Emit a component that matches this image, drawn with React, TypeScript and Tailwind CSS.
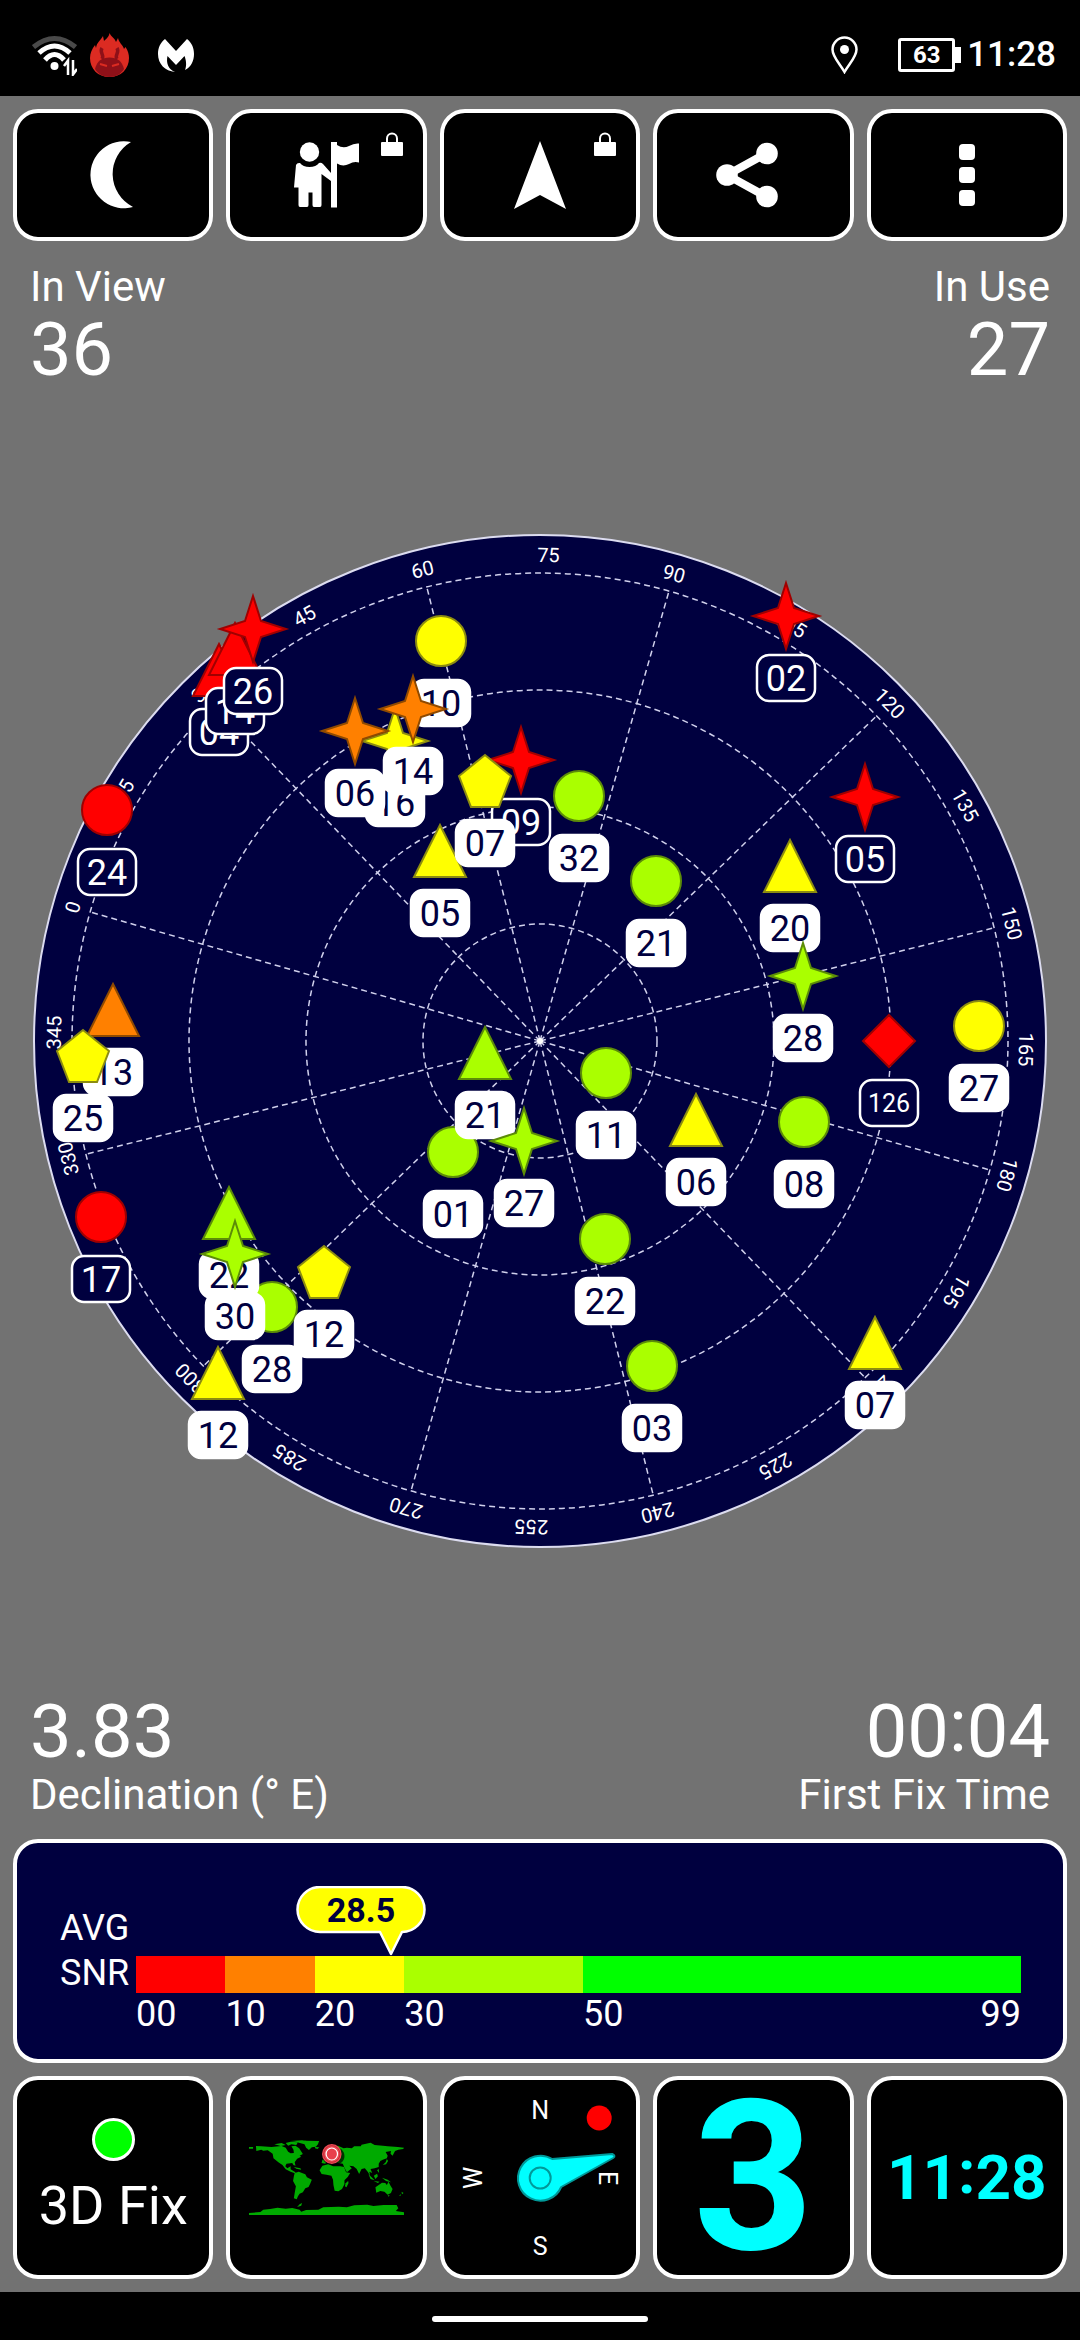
import type { ReactNode } from "react";

type Shape = "circle" | "triangle" | "star" | "pentagon" | "diamond";
type Tone = "red" | "orange" | "yellow" | "lime";
type Satellite = {
  id: string;
  shape: Shape;
  tone: Tone;
  x: number;
  y: number;
  unused?: boolean;
};

const TONES: Record<Tone, { fill: string; edge: string }> = {
  red: { fill: "#ff0000", edge: "#a00000" },
  orange: { fill: "#ff8000", edge: "#8f4a00" },
  yellow: { fill: "#ffff00", edge: "#8c8c10" },
  lime: { fill: "#aaff00", edge: "#5c8c08" },
};

// Positions are relative to the zenith, in chart units.
const SATELLITES: Satellite[] = [
  { id: "10", shape: "circle", tone: "yellow", x: -99, y: -400 },
  { id: "24", shape: "circle", tone: "red", x: -433, y: -231, unused: true },
  { id: "32", shape: "circle", tone: "lime", x: 39, y: -245 },
  { id: "21", shape: "circle", tone: "lime", x: 116, y: -160 },
  { id: "27", shape: "circle", tone: "yellow", x: 439, y: -15 },
  { id: "11", shape: "circle", tone: "lime", x: 66, y: 32 },
  { id: "08", shape: "circle", tone: "lime", x: 264, y: 81 },
  { id: "01", shape: "circle", tone: "lime", x: -87, y: 111 },
  { id: "17", shape: "circle", tone: "red", x: -439, y: 176, unused: true },
  { id: "22", shape: "circle", tone: "lime", x: 65, y: 198 },
  { id: "28", shape: "circle", tone: "lime", x: -268, y: 266 },
  { id: "03", shape: "circle", tone: "lime", x: 112, y: 325 },
  { id: "126", shape: "diamond", tone: "red", x: 349, y: 0, unused: true },
  { id: "04", shape: "triangle", tone: "red", x: -321, y: -371, unused: true },
  { id: "14", shape: "triangle", tone: "red", x: -305, y: -392, unused: true },
  { id: "05", shape: "triangle", tone: "yellow", x: -100, y: -190 },
  { id: "20", shape: "triangle", tone: "yellow", x: 250, y: -175 },
  { id: "13", shape: "triangle", tone: "orange", x: -427, y: -31 },
  { id: "21", shape: "triangle", tone: "lime", x: -55, y: 12 },
  { id: "06", shape: "triangle", tone: "yellow", x: 156, y: 79 },
  { id: "22", shape: "triangle", tone: "lime", x: -311, y: 172 },
  { id: "12", shape: "triangle", tone: "yellow", x: -322, y: 332 },
  { id: "07", shape: "triangle", tone: "yellow", x: 335, y: 302 },
  { id: "26", shape: "star", tone: "red", x: -287, y: -412, unused: true },
  { id: "02", shape: "star", tone: "red", x: 246, y: -425, unused: true },
  { id: "05", shape: "star", tone: "red", x: 325, y: -244, unused: true },
  { id: "09", shape: "star", tone: "red", x: -19, y: -281, unused: true },
  { id: "28", shape: "star", tone: "lime", x: 263, y: -65 },
  { id: "27", shape: "star", tone: "lime", x: -16, y: 100 },
  { id: "30", shape: "star", tone: "lime", x: -305, y: 213 },
  { id: "16", shape: "star", tone: "yellow", x: -145, y: -300 },
  { id: "06", shape: "star", tone: "orange", x: -185, y: -310 },
  { id: "14", shape: "star", tone: "orange", x: -127, y: -332 },
  { id: "07", shape: "pentagon", tone: "yellow", x: -55, y: -260 },
  { id: "25", shape: "pentagon", tone: "yellow", x: -457, y: 15 },
  { id: "12", shape: "pentagon", tone: "yellow", x: -216, y: 231 },
];

const OUTLINES: Record<Exclude<Shape, "circle">, string> = {
  triangle: "0,-26 26,26 -26,26",
  star: "0,-33 8,-8 33,0 8,8 0,33 -8,8 -33,0 -8,-8",
  pentagon: "0,-26 26,-5 14,26 -14,26 -26,-5",
  diamond: "0,-26 26,0 0,26 -26,0",
};

const NAVY = "#00003f";
const HEADING = 74;
const RINGS = [117, 234, 351, 468];
const SPOKES = Array.from({ length: 12 }, (_, i) => i * 30);
const DEGREES = Array.from({ length: 24 }, (_, i) => i * 15);

function Marker({ sat }: { sat: Satellite }) {
  const { fill, edge } = TONES[sat.tone];
  return (
    <g transform={`translate(${sat.x} ${sat.y})`}>
      {sat.shape === "circle" ? (
        <circle r="25" fill={fill} stroke={edge} strokeWidth="2" />
      ) : (
        <polygon points={OUTLINES[sat.shape]} fill={fill} stroke={edge} strokeWidth="2" />
      )}
      <rect
        x="-29"
        y="39"
        width="58"
        height="46"
        rx="12"
        fill={sat.unused ? NAVY : "#ffffff"}
        stroke="#ffffff"
        strokeWidth="2.5"
      />
      <text
        y={sat.id.length > 2 ? 71 : 75}
        textAnchor="middle"
        fontSize={sat.id.length > 2 ? 25 : 36}
        fill={sat.unused ? "#ffffff" : NAVY}
      >
        {sat.id}
      </text>
    </g>
  );
}

function SkyPlot() {
  return (
    <svg viewBox="-540 -520 1080 1040" className="block w-full" role="img" aria-label="Satellite sky plot">
      <circle r="506" fill={NAVY} stroke="#dcdcf0" strokeWidth="2" />
      <g fill="none" stroke="#d0d0ec" strokeWidth="1.5" strokeDasharray="6 4">
        {RINGS.map((r) => (
          <circle key={r} r={r} />
        ))}
        {SPOKES.map((a) => (
          <line key={a} y2="-468" transform={`rotate(${a - HEADING})`} />
        ))}
      </g>
      <circle r="3" fill="#ffffff" />
      {DEGREES.map((d) => (
        <text key={d} y="-479" textAnchor="middle" fontSize="20" fill="#ffffff" transform={`rotate(${d - HEADING})`}>
          {d}
        </text>
      ))}
      {SATELLITES.map((sat) => (
        <Marker key={sat.shape + sat.id + sat.tone} sat={sat} />
      ))}
    </svg>
  );
}

function WifiIcon() {
  return (
    <svg viewBox="0 0 45 41" className="h-[41px] w-[45px]" fill="none" strokeWidth="5">
      <path d="M1.500 12Q22.500-5 43.500 12" stroke="#4a4a4a" />
      <path d="M7 18Q22.500 4 38 18" stroke="#fff" />
      <path d="M13 25Q22.500 14 32 25" stroke="#fff" />
      <circle cx="22.500" cy="31" r="4" fill="#fff" />
      <path d="M36 40V25.500L32 31M41 25V39.500L45 34" stroke="#fff" strokeWidth="2.500" />
    </svg>
  );
}

function FlameIcon() {
  return (
    <svg viewBox="0 0 39 44" className="h-[44px] w-[39px]">
      <path
        d="M19.500 0C21 4 25 5 26 9L28 5C29 10 33 12 34 16L35.500 14C38 18 39 21 39 25C39 36 31 44 19.500 44S0 36 0 25C0 20 2 16 5 12L6 15C7 9 10 8 13 3L14 8C16 6 19 4 19.500 0Z"
        fill="#dc2b22"
      />
      <path d="M5 36C7 28 12 24.500 19.500 24.500S32 28 34 36C31 41 26 44 19.500 44S8 41 5 36Z" fill="#8e1018" />
      <path d="M12 26C15 22 9 20 12 15M27 26C24 22 30 20 27 15" stroke="#8e1018" strokeWidth="3.500" fill="none" />
      <path d="M10 31L17 33M29 31L22 33" stroke="#dc2b22" strokeWidth="2" />
    </svg>
  );
}

function ButterflyIcon() {
  return (
    <svg viewBox="0 0 36 33" className="h-[33px] w-[36px]" fill="#fff">
      <path d="M7 0L18 12L29 0C34 4 36 9 36 15C36 22 33 28 27 31C29 26 28 21 26.500 17L18 26L9.500 17C8 24 10 30 17 33C7 32 0 25 0 15C0 9 2 4 7 0Z" />
    </svg>
  );
}

function StatusBar() {
  return (
    <header className="flex h-[96px] items-center justify-between bg-black pt-[14px] pr-[24px] pl-[32px]">
      <div className="flex items-center">
        <WifiIcon />
        <span className="ml-[13px]">
          <FlameIcon />
        </span>
        <span className="ml-[29px]">
          <ButterflyIcon />
        </span>
      </div>
      <div className="flex items-center">
        <svg viewBox="0 0 27 38" className="h-[38px] w-[27px]" fill="none" stroke="#fff" strokeWidth="2.500">
          <path d="M13.500 36C9 28 1.500 21 1.500 13.500A12 12 0 0 1 25.500 13.500C25.500 21 18 28 13.500 36Z" />
          <circle cx="13.500" cy="13.500" r="4.500" fill="#fff" stroke="none" />
        </svg>
        <div className="ml-[40px] flex items-center">
          <span className="flex h-[34px] w-[57px] items-center justify-center rounded-[3px] border-[3px] border-white text-[24px] leading-[28px] font-bold">
            63
          </span>
          <span className="h-[16px] w-[6px] bg-white" />
        </div>
        <span className="ml-[6px] text-[35px] leading-[42px] font-medium">11:28</span>
      </div>
    </header>
  );
}

function Tool({ label, locked, children }: { label: string; locked?: boolean; children: ReactNode }) {
  return (
    <button
      type="button"
      aria-label={label}
      className="relative flex h-[132px] items-center justify-center rounded-[25px] border-[4px] border-white bg-black"
    >
      {children}
      {locked && (
        <svg viewBox="0 0 22 24" className="absolute top-[19px] right-[20px] h-[24px] w-[22px]">
          <rect y="10" width="22" height="14" rx="1" fill="#fff" />
          <path d="M6 11V6.500A5 5 0 0 1 16 6.500V11" fill="none" stroke="#fff" strokeWidth="2" />
        </svg>
      )}
    </button>
  );
}

function Toolbar() {
  return (
    <nav className="grid grid-cols-5 gap-[13px]">
      <Tool label="Night mode">
        <svg viewBox="0 0 46 68" className="h-[68px] w-[46px]" fill="#fff">
          <path d="M41 1A33.500 33.500 0 1 0 43 66A37 37 0 0 1 41 1Z" />
        </svg>
      </Tool>
      <Tool label="Waypoint" locked>
        <svg viewBox="0 0 65 66" className="h-[66px] w-[65px]" fill="#fff">
          <circle cx="15.500" cy="10" r="9.700" />
          <path d="M2 23Q3 20.500 6 21Q9 25 15.500 25Q22 25 25 21Q27 20 29 22L37 31V39L27.500 32V63Q27.500 65 26 65H20Q18.500 65 18.500 63V50.500H14.500V63Q14.500 65 13 65H6Q4.500 65 4.500 63V45.500H0Z" />
          <path d="M37 0H43V3Q49 7 55 4Q60 1 65 1.500V20.500Q60 19 55 22Q49 25 43 21.500V65.500H37Z" />
        </svg>
      </Tool>
      <Tool label="Navigate" locked>
        <svg viewBox="0 0 52 68" className="h-[68px] w-[52px]" fill="#fff">
          <path d="M26 0L52 68L26 54L0 68Z" />
        </svg>
      </Tool>
      <Tool label="Share">
        <svg viewBox="0 0 74 66" className="h-[66px] w-[74px]" fill="#fff">
          <path d="M50 11.500L11 33L50 54.500" fill="none" stroke="#fff" strokeWidth="8" />
          <circle cx="11" cy="33" r="10.800" />
          <circle cx="51" cy="11.500" r="10.800" />
          <circle cx="51" cy="54.500" r="10.800" />
        </svg>
      </Tool>
      <Tool label="More">
        <svg viewBox="0 0 16 62" className="h-[62px] w-[16px]" fill="#fff">
          <rect width="16" height="16" rx="4" />
          <rect y="23" width="16" height="16" rx="4" />
          <rect y="46" width="16" height="16" rx="4" />
        </svg>
      </Tool>
    </nav>
  );
}

function Colon() {
  return <span className="align-[6px] leading-[40px]">:</span>;
}

const LABEL = "text-[42px] leading-[50px]";
const VALUE = "text-[74px] leading-[76px]";

const SCALE = [
  { from: "00", span: 10, color: "bg-[#ff0000]" },
  { from: "10", span: 10, color: "bg-[#ff8000]" },
  { from: "20", span: 10, color: "bg-[#ffff00]" },
  { from: "30", span: 20, color: "bg-[#aaff00]" },
  { from: "50", span: 49, color: "bg-[#00ff00]", to: "99" },
];

function SnrPanel() {
  const average = 28.5;
  return (
    <section className="flex rounded-[25px] border-[4px] border-white bg-[#00003f] pt-[63px] pr-[42px] pb-[24px] pl-[43px] text-[36px]">
      <div className="w-[76px] shrink-0 leading-[45px]">
        <div>AVG</div>
        <div>SNR</div>
      </div>
      <div className="relative mt-[50px] flex flex-1">
        {SCALE.map((s) => (
          <div key={s.from} style={{ flexGrow: s.span }} className="basis-0">
            <div className={"h-[37px] " + s.color} />
            <div className="flex justify-between leading-[42px]">
              <span>{s.from}</span>
              {s.to && <span>{s.to}</span>}
            </div>
          </div>
        ))}
        <svg
          viewBox="-95 -70 130 70"
          className="absolute bottom-full h-[70px] w-[130px] -translate-x-[95px]"
          style={{ left: `${(average / 99) * 100}%` }}
        >
          <path
            d="M0-2L-11-24H-71A22.500 22.500 0 0 1-71-69H11A22.500 22.500 0 0 1 11-24Z"
            fill="#ffff00"
            stroke="#ffffff"
            strokeWidth="2.5"
            strokeLinejoin="round"
          />
          <text x="-30" y="-34" textAnchor="middle" fontSize="34" fontWeight="700" fill={NAVY}>
            {average}
          </text>
        </svg>
      </div>
    </section>
  );
}

function WorldMap() {
  return (
    <svg viewBox="610 243 380 225" preserveAspectRatio="none" className="h-[75px] w-[155px] overflow-visible">
      <g fill="#00aa00">
        <path d="M610 468V462L638 459L645 452L662 450L680 446L700 449L716 447L734 452L738 458L750 453L780 452L792 445L830 443L850 445L868 439L900 437L915 441L940 438L972 438L976 448L970 456L990 460V468Z" />
        <path d="M728 444L734 436L740 432L738 440Z" />
        <path d="M610 264H620V269H610ZM627 261L640 262L665 264L690 261L700 266L706 278L712 283L720 282L719 272L714 262L724 260L733 268L742 285L734 290L738 293L728 299L722 310L724 320L719 318L716 312L702 314L699 322L704 328L712 322L712 331L722 338L726 344L712 338L700 331L692 318L682 310L670 298L668 284L656 274L645 275L640 272L628 276Z" />
        <path d="M672 256L690 252L700 258L688 261ZM700 252L712 248L730 250L726 258L714 256L706 260ZM712 246L740 244L752 246L740 250L728 249Z" />
        <path d="M728 250L748 245L782 246L779 256L774 263L764 265L757 273L750 266L746 256ZM772 264L782 265L778 270L772 268Z" />
        <path d="M720 324L736 328L738 332L726 329Z" />
        <path d="M722 342L732 338L748 346L752 355L764 362L760 374L756 384L748 388L742 400L734 404L730 412L727 421L720 418L722 402L725 382L718 366L720 352Z" />
        <path d="M790 320L806 315L816 322L834 322L843 324L848 340L858 342L852 354L844 364L844 376L838 390L829 397L820 395L817 378L816 362L812 350L800 347L788 345L783 334Z" />
        <path d="M853 366L854 372L849 385L845 382L847 373Z" />
        <path d="M842 268L850 266L862 268L868 262L884 262L886 257L908 251L918 258L938 260L950 262L975 264L990 266L988 270L976 272L968 276L962 290L957 284L958 276L945 279L950 290L948 298L938 302L932 306L928 314L928 324L918 328L908 330L912 342L905 338L907 350L901 338L894 328L886 330L880 345L874 330L866 322L856 320L862 328L850 340L844 326L840 314L828 312L820 308L812 302L802 306L797 314L788 312L790 302L798 300L794 294L804 288L806 276L815 264L828 260Z" />
        <path d="M938 318L945 310L948 300L951 306L946 316Z" />
        <path d="M903 346L912 356L918 364L908 360ZM916 350L924 344L926 352L920 360ZM916 366L930 368L926 372ZM924 334L929 342L928 330ZM936 356L950 362L958 370L946 366Z" />
        <path d="M920 385L928 378L936 371L944 372L948 378L952 368L957 380L962 390L958 402L950 407L942 398L932 396L922 401ZM950 409H955L952 413Z" />
        <path d="M984 398L989 402L985 406ZM978 410L983 405L981 411Z" />
      </g>
      <ellipse cx="817" cy="291" rx="27" ry="29" fill="#000000" opacity="0.7" />
      <ellipse cx="813" cy="285" rx="24" ry="30" fill="#ee4b55" />
      <ellipse cx="813" cy="285" rx="20" ry="25" fill="none" stroke="#b3202c" strokeWidth="2" />
      <ellipse cx="813" cy="285" rx="14" ry="18" fill="#e8404c" stroke="#ffffff" strokeWidth="3" />
    </svg>
  );
}

function Compass() {
  return (
    <svg viewBox="-96 -98 192 195" className="h-full w-full" fontSize="25" fill="#fff" textAnchor="middle">
      <text y="-59">N</text>
      <text y="77">S</text>
      <text transform="translate(68 0) rotate(90)" y="9">
        E
      </text>
      <text transform="translate(-67 0) rotate(-90)" y="9">
        W
      </text>
      <circle cx="59" cy="-60" r="12.500" fill="#ff0000" />
      <path
        d="M12-19L72-24Q76-22 73-20L21 9A22.500 22.500 0 1 1 12-19Z"
        fill="#00ffff"
        stroke="#009999"
        strokeWidth="2"
        strokeLinejoin="round"
      />
      <circle r="10.500" fill="none" stroke="#009999" strokeWidth="2" />
    </svg>
  );
}

function Tile({ label, children }: { label: string; children: ReactNode }) {
  return (
    <button
      type="button"
      aria-label={label}
      className="flex h-[203px] flex-col items-center justify-center rounded-[25px] border-[4px] border-white bg-black"
    >
      {children}
    </button>
  );
}

export default function App() {
  return (
    <div className="flex min-h-screen flex-col bg-[#727272] font-[Roboto,sans-serif] text-white">
      <StatusBar />
      <main className="flex flex-1 flex-col py-[13px]">
        <div className="px-[13px]">
          <Toolbar />
        </div>
        <div className="flex justify-between px-[30px] pt-[21px]">
          <div>
            <div className={LABEL}>In View</div>
            <div className={VALUE}>36</div>
          </div>
          <div className="text-right">
            <div className={LABEL}>In Use</div>
            <div className={VALUE}>27</div>
          </div>
        </div>
        <div className="flex flex-1 items-center">
          <SkyPlot />
        </div>
        <div className="flex justify-between px-[30px] pb-[19px]">
          <div>
            <div className={VALUE}>3.83</div>
            <div className={LABEL}>Declination (° E)</div>
          </div>
          <div className="text-right">
            <div className={VALUE}>
              00
              <Colon />
              04
            </div>
            <div className={LABEL}>First Fix Time</div>
          </div>
        </div>
        <div className="flex flex-col gap-[13px] px-[13px]">
          <SnrPanel />
          <div className="grid grid-cols-5 gap-[13px]">
            <Tile label="3D Fix">
              <span className="h-[43px] w-[43px] rounded-full border-[3px] border-white bg-[#00ff00]" />
              <span className="mt-[13px] text-[54px] leading-[64px]">3D Fix</span>
            </Tile>
            <Tile label="Map">
              <WorldMap />
            </Tile>
            <Tile label="Compass">
              <Compass />
            </Tile>
            <Tile label="Speed 3">
              <span className="text-[210px] leading-[195px] font-bold text-[#00ffff]">3</span>
            </Tile>
            <Tile label="Time 11:28">
              <span className="text-[62px] leading-[76px] font-bold text-[#00ffff]">
                11
                <Colon />
                28
              </span>
            </Tile>
          </div>
        </div>
      </main>
      <footer className="flex h-[48px] items-center justify-center bg-black pt-[6px]">
        <span className="h-[6px] w-[216px] rounded-full bg-white" />
      </footer>
    </div>
  );
}
